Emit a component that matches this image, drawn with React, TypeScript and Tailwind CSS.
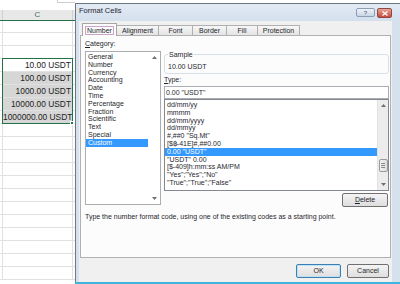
import React from "react";

const categories = [
	"General",
	"Number",
	"Currency",
	"Accounting",
	"Date",
	"Time",
	"Percentage",
	"Fraction",
	"Scientific",
	"Text",
	"Special",
	"Custom",
];

const formats = [
	"dd/mm/yy",
	"mmmm",
	"dd/mm/yyyy",
	"dd/mmyy",
	'#,##0 "Sq.Mt"',
	"[$฿-41E]#,##0.00",
	'0.00 "USDT"',
	'"USDT" 0.00',
	"[$-409]h:mm:ss AM/PM",
	'"Yes";"Yes";"No"',
	'"True";"True";"False"',
];

const cells: Record<number, string> = {
	3: "10.00 USDT",
	4: "100.00 USDT",
	5: "1000.00 USDT",
	6: "10000.00 USDT",
	7: "1000000.00 USDT",
};

const tabs = [
	{ label: "Number", w: "w-[35px]" },
	{ label: "Alignment", w: "w-[42px]" },
	{ label: "Font", w: "w-[34px]" },
	{ label: "Border", w: "w-[34px]" },
	{ label: "Fill", w: "w-[31px]" },
	{ label: "Protection", w: "w-[42px]" },
];

const UpArrow = () => (
	<svg width="5" height="3" viewBox="0 0 5 3">
		<path d="M0 3 L2.5 0 L5 3Z" fill="#707070" />
	</svg>
);

const DownArrow = () => (
	<svg width="5" height="3" viewBox="0 0 5 3">
		<path d="M0 0 L2.5 3 L5 0Z" fill="#707070" />
	</svg>
);

const Sheet: React.FC = () => (
	<div className="relative w-[75px] h-full shrink-0 bg-white font-['Liberation_Sans',Arial,sans-serif]">
		<div className="h-[10px] flex justify-end">
			<div className="w-[18px] h-[3px] border-l border-b border-[#cfcfcf]" />
		</div>
		<div className="h-[11px] flex bg-[#e8e8e8] border-b border-[#217346]">
			<div className="w-[2px]" />
			<div className="w-[71px] border-l border-r border-[#d0d0d0] text-center text-[8px] leading-[10px] text-[#4a6e5a]">
				C
			</div>
			<div className="flex-1" />
		</div>
		{Array.from({ length: 20 }).map((_, i) => (
			<div
				key={i}
				className={`flex border-b border-[#e1e1e1] ${i === 0 ? "h-[12px]" : "h-[13px]"}`}
			>
				<div className="w-[2px]" />
				<div
					className={`w-[71px] border-l border-r border-[#e1e1e1] text-right pr-[1px] text-[8.4px] leading-[12px] text-[#222] whitespace-nowrap ${
						i >= 4 && i <= 7 ? "bg-[#d6d6d6]" : ""
					}`}
				>
					{cells[i] ?? ""}
				</div>
				<div className="flex-1" />
			</div>
		))}
		{/* selection */}
		<div className="absolute left-[2px] top-[58px] w-[71px] h-[66px] border border-[#217346]" />
		<div className="absolute left-[70px] top-[121px] w-[4px] h-[4px] bg-[#217346] border border-white" />
	</div>
);

const Btn: React.FC<{ w: string; primary?: boolean; children: React.ReactNode }> = ({
	w,
	primary,
	children,
}) => (
	<div
		className={`${w} h-[14px] rounded-[2px] border flex items-center justify-center leading-[8px] bg-linear-to-b from-[#f4f4f4] to-[#dedede] ${
			primary ? "border-[#3c7fb1] shadow-[inset_0_0_0_1px_#bfe1f6]" : "border-[#707070]"
		}`}
	>
		{children}
	</div>
);

const Dialog: React.FC = () => (
	<div className="mt-[3px] flex-1 flex flex-col border-l border-t border-[#6b7787] bg-[#d6e1ee] font-['Liberation_Sans',Arial,sans-serif] text-[7px] text-[#1f1f2e]">
		{/* title bar */}
		<div className="h-[17px] flex items-start bg-linear-to-b from-[#e2eaf5] to-[#d4e0ed]">
			<div className="pl-[3px] pt-[3px] text-[7.5px] leading-[8px]">Format Cells</div>
			<div className="ml-auto flex gap-[2px] pt-[4px] pr-[8px]">
				<div className="w-[19px] h-[9px] rounded-[2px] border border-[#8d9db3] bg-linear-to-b from-[#eef3f9] to-[#c9d6e6] flex items-center justify-center text-[6px] leading-[6px] text-[#4d5d72]">
					?
				</div>
				<div className="w-[15px] h-[10px] rounded-[2px] border border-[#8c4a45] bg-linear-to-b from-[#e9a393] to-[#c7493c] flex items-center justify-center">
					<svg width="6" height="5" viewBox="0 0 6 5">
						<path d="M0.5 0.5 L5.5 4.5 M5.5 0.5 L0.5 4.5" stroke="white" strokeWidth="1.3" />
					</svg>
				</div>
			</div>
		</div>

		{/* client */}
		<div className="flex-1 flex flex-col bg-[#f0f0f0] ml-[3px] mr-[8px] px-[1px]">
			{/* tabs */}
			<div className="h-[14px] flex items-end pl-[2px]">
				{tabs.map((t, i) =>
					i === 0 ? (
						<div
							key={t.label}
							className={`${t.w} h-[13px] -mb-px relative z-10 bg-[#fcfcfc] border-l border-t border-r border-[#a5a5a5] flex items-center justify-center`}
						>
							<span className="border border-[#caa3c8] px-[1px] leading-[7px]">{t.label}</span>
						</div>
					) : (
						<div
							key={t.label}
							className={`${t.w} h-[10px] border-t border-r border-[#b0b0b0] bg-linear-to-b from-[#f7f7f7] to-[#e4e4e4] flex items-center justify-center leading-[8px]`}
						>
							{t.label}
						</div>
					)
				)}
			</div>

			{/* panel */}
			<div className="h-[223px] border border-[#b1b1b1] bg-[#fcfcfc] pt-[4px] pl-[4px] pr-[1px]">
				<div className="flex gap-[3px]">
					{/* category */}
					<div className="w-[76px]">
						<div className="leading-[8px]">
							<span className="underline">C</span>ategory:
						</div>
						<div className="mt-[3px] h-[154px] border border-[#abadb3] bg-white flex">
							<div className="flex-1 pt-[1px]">
								{categories.map((c) => (
									<div
										key={c}
										className={`h-[7.8px] leading-[7.8px] pl-[2px] ${
											c === "Custom" ? "bg-[#3399ff] text-white" : ""
										}`}
									>
										{c}
									</div>
								))}
							</div>
							<div className="w-[12px] flex flex-col items-center justify-between py-[4px]">
								<UpArrow />
								<DownArrow />
							</div>
						</div>
					</div>

					{/* right column */}
					<div className="w-[225px] flex flex-col">
						<div className="mt-[14px] h-[20px] border border-[#d5dfe5] rounded-[3px] px-[3px]">
							<div className="-mt-[4px] w-fit bg-[#fcfcfc] px-[1px] leading-[8px]">Sample</div>
							<div className="mt-[4px] leading-[8px]">10.00 USDT</div>
						</div>
						<div className="mt-[2px] leading-[8px]">
							<span className="underline">T</span>ype:
						</div>
						<div className="mt-[2px] h-[13px] border border-[#abadb3] bg-white pl-[1px] leading-[11px]">
							0.00 "USDT"
						</div>
						<div className="h-[92px] border border-[#828790] bg-white flex">
							<div className="flex-1 pt-[1px]">
								{formats.map((f, i) => (
									<div
										key={f}
										className={`h-[7.8px] leading-[7.8px] pl-[2px] whitespace-nowrap ${
											i === 6 ? "bg-[#3399ff] text-white" : ""
										}`}
									>
										{f}
									</div>
								))}
							</div>
							<div className="w-[11px] bg-[#ececec] border-l border-[#e2e2e2] flex flex-col items-center pt-[4px] pb-[4px]">
								<UpArrow />
								<div className="mt-[52px] w-[9px] h-[13px] rounded-[2px] border border-[#9a9a9a] bg-linear-to-r from-[#f3f3f3] to-[#dcdcdc] flex flex-col items-center justify-center gap-[1px]">
									<div className="w-[4px] h-px bg-[#8a8a8a]" />
									<div className="w-[4px] h-px bg-[#8a8a8a]" />
									<div className="w-[4px] h-px bg-[#8a8a8a]" />
								</div>
								<div className="mt-auto">
									<DownArrow />
								</div>
							</div>
						</div>
						<div className="mt-[2px] self-end mr-px">
							<Btn w="w-[46px]">
								<span>
									<span className="underline">D</span>elete
								</span>
							</Btn>
						</div>
					</div>
				</div>

				<div className="mt-[6px] leading-[8px] whitespace-nowrap">
					Type the number format code, using one of the existing codes as a starting point.
				</div>
			</div>

			{/* buttons */}
			<div className="flex justify-end gap-[6px] pt-[6px] pr-[2px]">
				<Btn w="w-[45px]" primary>
					OK
				</Btn>
				<Btn w="w-[42px]">Cancel</Btn>
			</div>
		</div>
		<div className="h-[2px] bg-[#3fb5dd] -ml-px" />
	</div>
);

export default function App() {
	return (
		<div className="w-[400px] h-[284px] flex overflow-hidden bg-white">
			<Sheet />
			<Dialog />
		</div>
	);
}
